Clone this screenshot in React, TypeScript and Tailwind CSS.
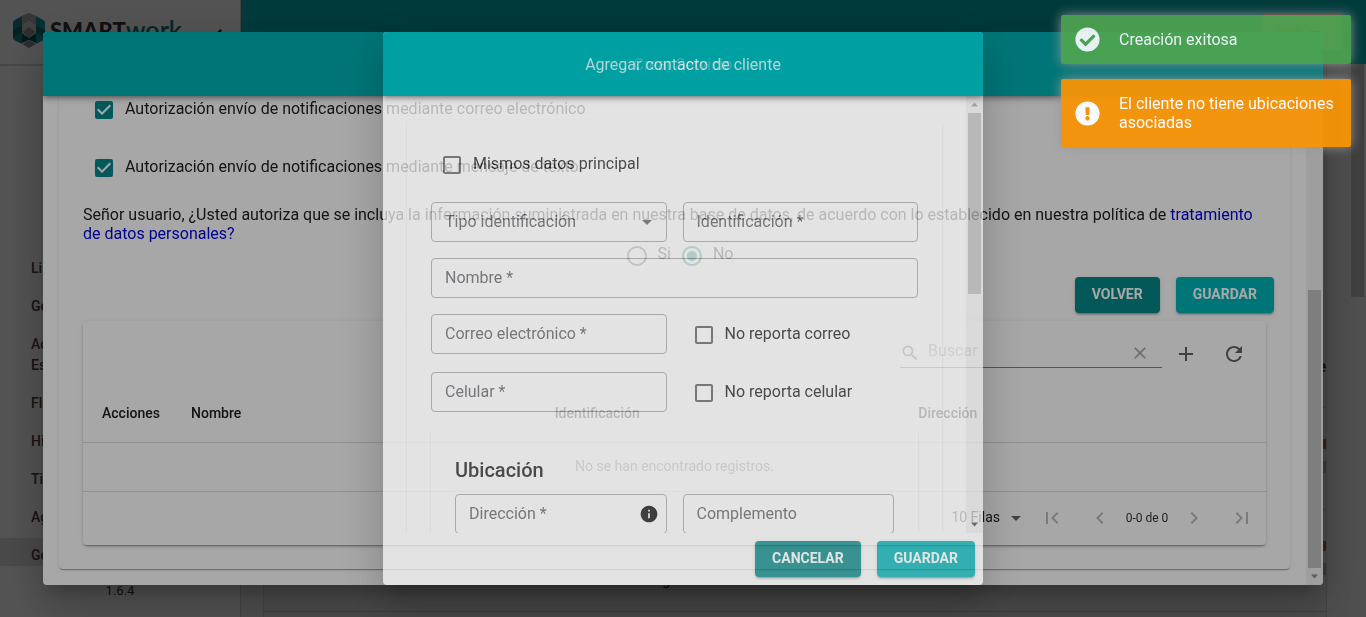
import { useId, type ReactNode } from "react";
import { FaCheckCircle, FaExclamationCircle } from "react-icons/fa";
import {
  MdAdd,
  MdArrowDropDown,
  MdCheckBox,
  MdCheckBoxOutlineBlank,
  MdChevronLeft,
  MdChevronRight,
  MdClose,
  MdFirstPage,
  MdInfo,
  MdLastPage,
  MdRadioButtonChecked,
  MdRadioButtonUnchecked,
  MdRefresh,
  MdSearch,
} from "react-icons/md";

const dialogShadow =
  "shadow-[0_11px_15px_-7px_rgba(0,0,0,0.2),0_24px_38px_3px_rgba(0,0,0,0.14),0_9px_46px_8px_rgba(0,0,0,0.12)]";
const cardShadow =
  "shadow-[0_2px_1px_-1px_rgba(0,0,0,0.2),0_1px_1px_0_rgba(0,0,0,0.14),0_1px_3px_0_rgba(0,0,0,0.12)]";
const raisedShadow =
  "shadow-[0_3px_1px_-2px_rgba(0,0,0,0.2),0_2px_2px_0_rgba(0,0,0,0.14),0_1px_5px_0_rgba(0,0,0,0.12)]";

function Logo() {
  return (
    <div className="flex items-center gap-1">
      <svg viewBox="0 0 34 36" className="h-9 w-[34px]">
        <path d="M17 1 10 4v15l7-6 7 6V4Z" fill="#8f8f8f" />
        <path d="M17 1 10 4v9l7-6 7 6V4Z" fill="#a9a9a9" />
        <path d="M10 4 2 8.500 1 10v16l1 2 8 4V4Z" fill="#1c8389" />
        <path d="M24 4l8 4.500 1 1.500v16l-1 2-8 4V4Z" fill="#12989d" />
        <path d="M10 13 1 18v8l9-5Z" fill="#0e6a70" />
        <path d="M24 13l9 5v8l-9-5Z" fill="#0b7378" />
        <path d="M17 8l7 5v7l-7-5-7 5v-7Z" fill="#c4c4c4" />
        <path d="M10 20l7-5 7 5-7 6Z" fill="#8d8d8d" />
        <path d="M10 21l7 5 7-5v10l-7-3-7 3Z" fill="#054f53" />
        <path d="M10 32l7-4 7 4-7 4Z" fill="#868686" />
      </svg>
      <span className="flex items-baseline font-['Lato'] leading-8 text-[#333]">
        <span className="text-[22px] font-black">SMART</span>
        <span className="text-[25px] font-semibold text-[#007c80]">work</span>
      </span>
    </div>
  );
}

const menuItems = [
  "Listas",
  "Gestión",
  "Actividades Especiales",
  "Flujos",
  "Historial",
  "Tipos",
  "Agenda",
  "Gestión clientes",
];

function Sidebar() {
  return (
    <aside className="flex w-[241px] shrink-0 flex-col border-r border-[#d0d0d0] bg-white">
      <div className="flex h-[66px] shrink-0 items-center justify-between border-b-2 border-[#d8d8d8] pr-2 pl-3">
        <div className="-mt-1">
          <Logo />
        </div>
        <MdChevronLeft className="mt-2 size-7 text-[#222]" />
      </div>
      <nav className="flex flex-col gap-2.5 pt-[185px] text-[14px] leading-[21px] font-medium text-[#4a3a3e]">
        {menuItems.map((item, i) => (
          <a
            key={item}
            href="#menu"
            className={
              i === menuItems.length - 1 ? "bg-[#e0e0e0] pt-[7px] pr-20 pl-[31px]" : "pt-[7px] pr-20 pl-[31px]"
            }
          >
            {item === "Actividades Especiales" ? (
              <>
                Actividades
                <br />
                Especiales
              </>
            ) : (
              item
            )}
          </a>
        ))}
      </nav>
      <p className="pt-[15px] text-center text-[13px] text-[#333]">1.6.4</p>
    </aside>
  );
}

function ListRow() {
  return (
    <div className="flex h-[102px] shrink-0 items-end justify-between border-b border-[#c4c4c4] pb-5 pl-[377px] text-[14px]">
      <span>Cargo</span>
      <span className="flex flex-col gap-3 pb-4">
        <span className="h-2.5 w-4 bg-[#c06810]" />
        <span className="h-3 w-4 bg-[#a8b8c4]" />
      </span>
    </div>
  );
}

function Page() {
  return (
    <div className="flex h-full">
      <Sidebar />
      <div className="flex min-w-0 flex-1 flex-col">
        <header className="flex h-16 shrink-0 items-start justify-end bg-[#00b3b6] pt-3.5 pr-6">
          <button
            type="button"
            aria-label="Idioma"
            className="flex h-9 w-20 items-center justify-center rounded border-t border-[#ff6a5c] bg-[#d8e0c8]"
          >
            <span className="h-3 w-6 bg-[#d0a020]" />
            <MdArrowDropDown className="size-6" />
          </button>
        </header>
        <div className="flex min-h-0 flex-1">
          <main className="flex min-w-0 flex-1 flex-col bg-[#f0f0f0] px-[22px]">
            <div className="flex min-h-0 flex-1 flex-col overflow-hidden border-x border-[#cfcfcf] bg-[#e8e8e8]">
              <div className="flex h-[344px] shrink-0 items-end justify-end border-b border-[#c4c4c4] pb-7 text-[16px] font-medium">
                Cliente
              </div>
              <ListRow />
              <ListRow />
            </div>
          </main>
          <div className="w-[17px] bg-[#f1f1f1] px-0.5">
            <div className="h-[233px] bg-[#c1c1c1]" />
          </div>
        </div>
      </div>
    </div>
  );
}

function Check({ label, checked = false }: { label: string; checked?: boolean }) {
  const id = useId();
  return (
    <div className="flex items-center">
      <span className="relative flex size-[42px] items-center justify-center">
        <input id={id} type="checkbox" defaultChecked={checked} className="absolute inset-0 opacity-0" />
        {checked ? (
          <MdCheckBox className="size-6 text-[#068988]" />
        ) : (
          <MdCheckBoxOutlineBlank className="size-6 text-[#5f6368]" />
        )}
      </span>
      <label htmlFor={id} className="pb-0.5 leading-6">
        {label}
      </label>
    </div>
  );
}

function Radio({ label, checked = false }: { label: string; checked?: boolean }) {
  const id = useId();
  return (
    <div className="flex items-center">
      <span className="relative flex w-[42px] items-center justify-center">
        <input id={id} type="radio" name="autoriza" defaultChecked={checked} className="absolute inset-0 opacity-0" />
        {checked ? (
          <MdRadioButtonChecked className="size-6 text-[#068988]" />
        ) : (
          <MdRadioButtonUnchecked className="size-6 text-[#5f6368]" />
        )}
      </span>
      <label htmlFor={id} className="pb-1">
        {label}
      </label>
    </div>
  );
}

function ActionButton({ children, dark = false }: { children: ReactNode; dark?: boolean }) {
  return (
    <button
      type="button"
      className={`flex items-center rounded px-[17px] pt-[7px] pb-[9px] text-[14px] leading-5 font-bold text-white uppercase ${raisedShadow} ${
        dark ? "bg-[#068988]" : "bg-[#00b3b6]"
      }`}
    >
      {children}
    </button>
  );
}

function Field({ label, children }: { label: string; children?: ReactNode }) {
  return (
    <div className="flex h-10 items-center rounded border border-[#a9a9a9] pr-[7px] pl-[13px]">
      <input
        aria-label={label}
        placeholder={label}
        className="w-full min-w-0 bg-transparent outline-none placeholder:text-[#5f6368]"
      />
      {children}
    </div>
  );
}

function DialogHeader({ children }: { children: ReactNode }) {
  return (
    <header className="relative flex h-16 shrink-0 items-center justify-center bg-[#00b3b6] pt-0.5 text-white shadow-[0_2px_4px_-1px_rgba(0,0,0,0.3),0_4px_5px_0_rgba(0,0,0,0.14),0_1px_10px_0_rgba(0,0,0,0.12)]">
      <h2 className="text-[16px]">{children}</h2>
    </header>
  );
}

function Triangle({ up = false, muted = false }: { up?: boolean; muted?: boolean }) {
  return (
    <svg viewBox="0 0 17 17" className="size-[17px]">
      <path
        d={up ? "M5 10.500h7l-3.500-4Z" : "M5 6.500h7l-3.500 4Z"}
        fill={muted ? "#8c8c8c" : up ? "#a3a3a3" : "#505050"}
      />
    </svg>
  );
}

function ContactTable() {
  return (
    <div className={`rounded ${raisedShadow}`}>
      <div className="flex h-[66px] items-center justify-end pr-2">
        <div className="flex h-7 w-[262px] items-center border-b border-[#808080]">
          <MdSearch className="mr-2 size-5 shrink-0 text-[#666]" />
          <input
            aria-label="Buscar"
            placeholder="Buscar"
            className="min-w-0 flex-1 bg-transparent pb-1 outline-none placeholder:text-[#9a9a9a]"
          />
          <button type="button" aria-label="Limpiar" className="mr-3 text-[#a6a6a6]">
            <MdClose className="size-5" />
          </button>
        </div>
        <button type="button" aria-label="Agregar" className="flex size-12 items-center justify-center text-[#5f6368]">
          <MdAdd className="size-6" />
        </button>
        <button type="button" aria-label="Refrescar" className="flex size-12 items-center justify-center text-[#5f6368]">
          <MdRefresh className="size-6" />
        </button>
      </div>
      <table className="w-full table-fixed text-left text-[14px]">
        <thead>
          <tr className="h-14 border-b border-[#dcdcdc]">
            <th className="w-[92px] pb-0.5 pl-[19px] font-medium">Acciones</th>
            <th className="pb-0.5 pl-4 font-medium">Nombre</th>
            <th className="pb-0.5 pl-4 font-medium">Identificación</th>
            <th className="pb-0.5 pl-4 font-medium">Dirección</th>
          </tr>
        </thead>
        <tbody>
          <tr className="h-[49px] border-b border-[#dcdcdc]">
            <td colSpan={4} className="pb-0.5 text-center text-[#777]">
              No se han encontrado registros.
            </td>
          </tr>
        </tbody>
      </table>
      <div className="flex h-[53px] items-center justify-end pb-0.5 text-[14px]">
        <button type="button" className="flex items-center gap-1">
          10 Filas
          <MdArrowDropDown className="size-6 text-[#666]" />
        </button>
        <div className="flex items-center text-[#bbb]">
          <button type="button" aria-label="Primera página" className="flex size-12 items-center justify-center">
            <MdFirstPage className="size-6" />
          </button>
          <button type="button" aria-label="Página anterior" className="flex size-12 items-center justify-center">
            <MdChevronLeft className="size-6" />
          </button>
          <span className="min-w-[46px] text-center text-[12px] text-[#333]">0-0 de 0</span>
          <button type="button" aria-label="Página siguiente" className="flex size-12 items-center justify-center">
            <MdChevronRight className="size-6" />
          </button>
          <button type="button" aria-label="Última página" className="flex size-12 items-center justify-center">
            <MdLastPage className="size-6" />
          </button>
        </div>
      </div>
    </div>
  );
}

function ClientDialog() {
  return (
    <div className="fixed inset-0 flex items-stretch justify-center bg-black/50 p-8">
      <section className={`flex w-full max-w-[1280px] flex-col overflow-hidden rounded bg-white ${dialogShadow}`}>
        <DialogHeader>Crear Servicio</DialogHeader>
        <div className="flex min-h-0 flex-1">
          <div className="flex min-w-0 flex-1 flex-col justify-end overflow-hidden px-4 pb-4">
            <div className={`shrink-0 rounded p-6 ${cardShadow}`}>
              <div className="flex flex-col gap-4">
                <Check label="Autorización envío de notificaciones mediante correo electrónico" checked />
                <Check label="Autorización envío de notificaciones mediante mensaje de texto" checked />
              </div>
              <p className="pt-4 leading-[19px]">
                Señor usuario, ¿Usted autoriza que se incluya la información suministrada en nuestra base de datos, de
                acuerdo con lo establecido en nuestra política de{" "}
                <a href="#politica" className="text-[#0000dd]">
                  tratamiento de datos personales?
                </a>
              </p>
              <div className="flex h-[27px] items-end justify-center">
                <Radio label="Si" />
                <Radio label="No" checked />
              </div>
              <div className="-mr-2 flex justify-end gap-4 pt-[7px] pb-2">
                <ActionButton dark>Volver</ActionButton>
                <ActionButton>Guardar</ActionButton>
              </div>
              <ContactTable />
            </div>
          </div>
          <div className="flex w-[17px] flex-col justify-end bg-[#f1f1f1]">
            <div className="mx-0.5 h-[278px] bg-[#c1c1c1]" />
            <Triangle muted />
          </div>
        </div>
      </section>
    </div>
  );
}

function ContactDialog() {
  return (
    <div className="fixed inset-0 flex items-stretch justify-center bg-black/[0.345] p-8">
      <section
        className={`flex w-full max-w-[600px] flex-col overflow-hidden rounded bg-white opacity-[0.69] ${dialogShadow}`}
      >
        <DialogHeader>Agregar contacto de cliente</DialogHeader>
        <div className="flex min-h-0 flex-1">
          <div className="min-w-0 flex-1 overflow-hidden p-6">
            <form className={`rounded p-6 ${cardShadow}`}>
              <div className="grid grid-cols-2 gap-4">
                <div className="col-span-2">
                  <Check label="Mismos datos principal" />
                </div>
                <Field label="Tipo identificación">
                  <MdArrowDropDown className="size-6 shrink-0 text-[#666]" />
                </Field>
                <Field label="Identificación *" />
                <div className="col-span-2">
                  <Field label="Nombre *" />
                </div>
                <Field label="Correo electrónico *" />
                <Check label="No reporta correo" />
                <Field label="Celular *" />
                <Check label="No reporta celular" />
              </div>
              <div className={`mt-4 rounded p-6 ${cardShadow}`}>
                <h3 className="pb-2 text-[20px] leading-8 font-medium">Ubicación</h3>
                <div className="grid grid-cols-2 gap-4">
                  <Field label="Dirección *">
                    <MdInfo className="size-5 shrink-0 text-[#111]" />
                  </Field>
                  <Field label="Complemento" />
                </div>
              </div>
            </form>
          </div>
          <div className="flex w-[17px] flex-col bg-[#f1f1f1]">
            <Triangle up />
            <div className="mx-0.5 h-[181px] bg-[#c1c1c1]" />
            <div className="flex-1" />
            <Triangle />
          </div>
        </div>
        <footer className="flex justify-end gap-4 p-2">
          <ActionButton dark>Cancelar</ActionButton>
          <ActionButton>Guardar</ActionButton>
        </footer>
      </section>
    </div>
  );
}

function Toasts() {
  return (
    <div className="fixed top-[15px] right-[15px] flex w-[290px] flex-col gap-[15px] text-[16px] leading-[19px] text-white">
      <div
        role="status"
        className="flex items-center gap-[19px] rounded-xs bg-[#51a651] py-[15px] pr-[15px] pl-[14px] opacity-90 shadow-[0_0_12px_#999]"
      >
        <FaCheckCircle className="-my-1 size-[25px] shrink-0" />
        <span>Creación exitosa</span>
      </div>
      <div
        role="alert"
        className="flex items-center gap-[19px] rounded-xs bg-[#f89406] py-[15px] pr-[15px] pl-[14px] opacity-95 shadow-[0_0_12px_#999]"
      >
        <FaExclamationCircle className="size-[25px] shrink-0" />
        <span>El cliente no tiene ubicaciones asociadas</span>
      </div>
    </div>
  );
}

export default function App() {
  return (
    <div className="h-screen overflow-hidden bg-[#f0f0f0] font-['Roboto',sans-serif] text-[16px] text-[#212121]">
      <Page />
      <ClientDialog />
      <ContactDialog />
      <Toasts />
    </div>
  );
}
